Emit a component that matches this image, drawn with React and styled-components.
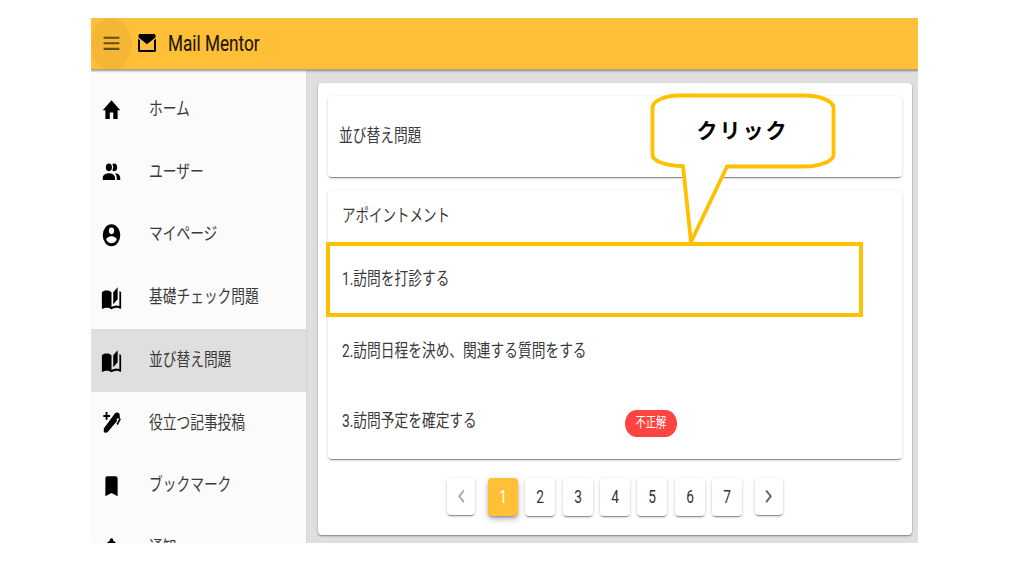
import React from "react";
import styled, { createGlobalStyle } from "styled-components";

const Global = createGlobalStyle`
  * { box-sizing: border-box; }
  body { margin: 0; background: #fff; font-family: Roboto, "Noto Sans CJK JP", sans-serif; }
`;

const Page = styled.div`
  width: 1014px;
  height: 570px;
  padding: 18px 96px 27px 91px;
  overflow: hidden;
`;

const Shell = styled.div`
  position: relative;
  display: flex;
  flex-direction: column;
  height: 525px;
  background: #dfdfdf;
  overflow: hidden;
`;

const Header = styled.header`
  position: relative;
  z-index: 1;
  display: flex;
  align-items: center;
  height: 52px;
  flex: none;
  background: #ffbf37;
  border-bottom: 1px solid #b5a078;
  box-shadow: 0 1px 2px rgba(0, 0, 0, 0.4);
`;

const MenuButton = styled.div`
  display: flex;
  align-items: center;
  justify-content: center;
  width: 41px;
  height: 52px;
  border-radius: 50%;
  background: rgba(0, 0, 0, 0.045);
  color: rgba(0, 0, 0, 0.58);
  svg { margin-bottom: 1px; }
`;

const Logo = styled.div`
  display: flex;
  margin: -2px 0 0 6px;
  width: 21px;
`;

const Condensed = styled.span`
  display: block;
  white-space: nowrap;
  transform-origin: ${(p) => p.$origin || "left"} center;
  transform: scaleX(${(p) => p.$scale || 0.773});
  font-size: ${(p) => p.$size || 17.75}px;
  line-height: 24px;
  font-weight: ${(p) => p.$weight || 400};
`;

const Brand = styled.div`
  margin: 0 0 0 9px;
  color: #1c1606;
  -webkit-text-stroke: 0.15px #1c1606;
`;

const Body = styled.div`
  display: flex;
  flex: 1;
  min-height: 0;
`;

const Sidebar = styled.nav`
  width: 216px;
  padding-top: 8px;
  background: #fbfbfb;
  border-right: 1px solid #d6d6d6;
  flex: none;
  overflow: hidden;
`;

const NavItem = styled.div`
  display: flex;
  align-items: center;
  height: 62.75px;
  padding-left: 10px;
  color: #3a3a3a;
  background: ${(p) => (p.$active ? "#dfdfdf" : "transparent")};
`;

const NavIcon = styled.div`
  display: flex;
  width: 48px;
  padding-top: 1px;
  color: #000;
`;

const NavLabel = styled.div`
  margin-top: -1px;
`;

const Content = styled.main`
  flex: 1;
  min-width: 0;
  padding: 13px 6px 8px 11px;
`;

const Sheet = styled.section`
  height: 452px;
  padding: 13px 10px 0;
  background: #fff;
  border-radius: 4px;
  box-shadow: 0 1px 2px rgba(0, 0, 0, 0.45);
`;

const Card = styled.section`
  height: ${(p) => p.$height}px;
  margin-bottom: 13px;
  background: #fff;
  border-radius: 4px;
  box-shadow: 0 2px 1px -1px rgba(0, 0, 0, 0.4), 0 1px 3px rgba(0, 0, 0, 0.2);
  color: #3a3a3a;
`;

const CardTitle = styled.div`
  padding: 28px 0 0 10.5px;
`;

const ListHead = styled.div`
  height: 53px;
  padding: 14px 0 0 14px;
`;

const Question = styled.div`
  display: flex;
  align-items: center;
  height: ${(p) => p.$height}px;
  padding-left: 13.5px;
`;

const QuestionText = styled.div`
  width: 283.5px;
`;

const Chip = styled.div`
  display: flex;
  align-items: center;
  justify-content: center;
  width: 52px;
  height: 27px;
  margin-top: 5px;
  padding-bottom: 1px;
  border-radius: 12px / 14px;
  background: #fe4440;
  color: #fff;
`;

const Pager = styled.div`
  display: flex;
  align-items: center;
  justify-content: center;
  height: 38px;
  margin-top: 18.5px;
  gap: 7.4px;
`;

const PageButton = styled.div`
  display: flex;
  align-items: center;
  justify-content: center;
  width: 30px;
  height: 38px;
  border-radius: 4px;
  background: ${(p) => (p.$active ? "#ffbf37" : "#fff")};
  color: ${(p) => (p.$active ? "#fff" : "#333")};
  box-shadow: ${(p) =>
    p.$active
      ? "0 2px 3px -1px rgba(0,0,0,.35), 0 3px 7px rgba(0,0,0,.25)"
      : "0 2px 1px -1px rgba(0,0,0,.35), 0 1px 3px rgba(0,0,0,.25)"};
`;

const ArrowButton = styled(PageButton)`
  width: 28px;
  height: 37px;
  margin: 0 5px;
  color: ${(p) => (p.$disabled ? "#aaa" : "#666")};
`;

const Highlight = styled.div`
  position: absolute;
  left: 235px;
  top: 224px;
  width: 536.5px;
  height: 74.5px;
  border: 4px solid #ffc000;
`;

const Callout = styled.div`
  position: absolute;
  left: 559px;
  top: 74px;
  width: 190px;
  height: 156px;
  svg { display: block; }
`;

const CalloutText = styled.div`
  position: absolute;
  left: 0;
  top: 22.5px;
  width: 184px;
  text-align: center;
  font-family: "Noto Sans CJK JP", sans-serif;
  font-weight: 700;
  font-size: 21px;
  letter-spacing: 2px;
  text-indent: 1px;
  line-height: 28px;
  color: #000;
`;

const paths = {
  home: "M10,20V14H14V20H19V12H22L12,3L2,12H5V20H10Z",
  users:
    "M16 17V19H2V17S2 13 9 13 16 17 16 17M12.5 7.5A3.5 3.5 0 1 0 9 11A3.5 3.5 0 0 0 12.5 7.5M15.94 13A5.32 5.32 0 0 1 18 17V19H22V17S22 13.37 15.94 13M15 4A3.39 3.39 0 0 0 13.07 4.59A5 5 0 0 1 13.07 10.41A3.39 3.39 0 0 0 15 11A3.5 3.5 0 0 0 15 4Z",
  account:
    "M12,19.2C9.5,19.2 7.29,17.92 6,16C6.03,14 10,12.9 12,12.9C14,12.9 17.97,14 18,16C16.71,17.92 14.5,19.2 12,19.2M12,5A3,3 0 0,1 15,8A3,3 0 0,1 12,11A3,3 0 0,1 9,8A3,3 0 0,1 12,5M12,2A10,10 0 0,0 2,12A10,10 0 0,0 12,22A10,10 0 0,0 22,12C22,6.47 17.5,2 12,2Z",
  book: "M19 2L14 6.5V17.5L19 13V2M6.5 5C4.55 5 2.45 5.4 1 6.5V21.16C1 21.41 1.25 21.66 1.5 21.66C1.6 21.66 1.65 21.59 1.75 21.59C3.1 20.94 5.05 20.5 6.5 20.5C8.45 20.5 10.55 20.9 12 22C13.35 21.15 15.8 20.5 17.5 20.5C19.15 20.5 20.85 20.81 22.25 21.56C22.35 21.61 22.4 21.59 22.5 21.59C22.75 21.59 23 21.34 23 21.09V6.5C22.4 6.05 21.75 5.75 21 5.5V19C19.9 18.65 18.7 18.5 17.5 18.5C15.8 18.5 13.35 19.15 12 20V6.5C10.55 5.4 8.45 5 6.5 5Z",
  pen: "M4.6 2H6.5V5H9V6.9H6.5V9.8H4.6V6.9H2.3V5H4.6Z M2.8 22.3V18.5L12.2 5.8L14 3.3Q16.5 1.6 18.6 4L18.8 7.5L17.6 8.9L16.8 7.9L15.4 9.7L16.2 10.8L6.5 22.3Q4.5 23.2 2.8 22.3Z M18.8 7.3L19.8 9.5L16.8 15L15.3 13.9L17.8 9.8Z",
  bookmark: "M17,3H7A2,2 0 0,0 5,5V21L12,18L19,21V5C19,3.89 18.1,3 17,3Z",
  bell: "M21,19V20H3V19L5,17V11C5,7.9 7.03,5.17 10,4.29C10,4.19 10,4.1 10,4A2,2 0 0,1 12,2A2,2 0 0,1 14,4C14,4.1 14,4.19 14,4.29C16.97,5.17 19,7.9 19,11V17L21,19Z",
  menu: "M3,6H21V8H3V6M3,11H21V13H3V11M3,16H21V18H3V16Z",
  mail: "M1.5 0H16.5L17.5 1V3.5L9 10.3L0.5 3.5V1Z M0 4.7L2 6.3V16H16V6.3L18 4.7V16.5Q18 18 16.5 18H1.5Q0 18 0 16.5Z",
  left: "M15.41,16.58L10.83,12L15.41,7.41L14,6L8,12L14,18L15.41,16.58Z",
  right: "M8.59,16.58L13.17,12L8.59,7.41L10,6L16,12L10,18L8.59,16.58Z",
};

const viewBoxes = { mail: "0 0 18 18", pen: "0 0 21 26.5" };

function Icon({ name, w = 21, h = 26.5 }) {
  return (
    <svg width={w} height={h} viewBox={viewBoxes[name] || "0 0 24 24"} preserveAspectRatio="none">
      <path d={paths[name]} fill="currentColor" />
    </svg>
  );
}

const navItems = [
  ["home", "ホーム"],
  ["users", "ユーザー"],
  ["account", "マイページ"],
  ["book", "基礎チェック問題"],
  ["book", "並び替え問題"],
  ["pen", "役立つ記事投稿"],
  ["bookmark", "ブックマーク"],
  ["bell", "通知"],
];

export default function App() {
  return (
    <Page>
      <Global />
      <Shell>
        <Header>
          <MenuButton><Icon name="menu" /></MenuButton>
          <Logo><Icon name="mail" w={18} h={18} /></Logo>
          <Brand><Condensed $size={22} $scale={0.78}>Mail Mentor</Condensed></Brand>
        </Header>
        <Body>
          <Sidebar>
            {navItems.map(([icon, label], i) => (
              <NavItem key={label} $active={i === 4}>
                <NavIcon><Icon name={icon} /></NavIcon>
                <NavLabel><Condensed>{label}</Condensed></NavLabel>
              </NavItem>
            ))}
          </Sidebar>
          <Content>
            <Sheet>
              <Card $height={81}>
                <CardTitle><Condensed>並び替え問題</Condensed></CardTitle>
              </Card>
              <Card $height={269}>
                <ListHead><Condensed $scale={0.76}>アポイントメント</Condensed></ListHead>
                <Question $height={72}><Condensed>1.訪問を打診する</Condensed></Question>
                <Question $height={71.5}><Condensed>2.訪問日程を決め、関連する質問をする</Condensed></Question>
                <Question $height={69}>
                  <QuestionText><Condensed>3.訪問予定を確定する</Condensed></QuestionText>
                  <Chip><Condensed $size={13.3} $origin="center">不正解</Condensed></Chip>
                </Question>
              </Card>
              <Pager>
                <ArrowButton $disabled><Icon name="left" /></ArrowButton>
                {[1, 2, 3, 4, 5, 6, 7].map((n) => (
                  <PageButton key={n} $active={n === 1}>
                    <Condensed $origin="center">{n}</Condensed>
                  </PageButton>
                ))}
                <ArrowButton><Icon name="right" /></ArrowButton>
              </Pager>
            </Sheet>
          </Content>
        </Body>
        <Highlight />
        <Callout>
          <svg width="190" height="156" viewBox="0 0 190 156">
            <path
              d="M30 3.5H154C170 3.5 183.5 9 183.5 16V63C183.5 69 170 74.5 154 74.5H77L41 150L33 74C16 74 2.5 69 2.5 63V16C2.5 9 14 3.5 30 3.5Z"
              fill="#fff"
              stroke="#ffc000"
              strokeWidth="3.8"
              strokeLinejoin="round"
            />
          </svg>
          <CalloutText>クリック</CalloutText>
        </Callout>
      </Shell>
    </Page>
  );
}
